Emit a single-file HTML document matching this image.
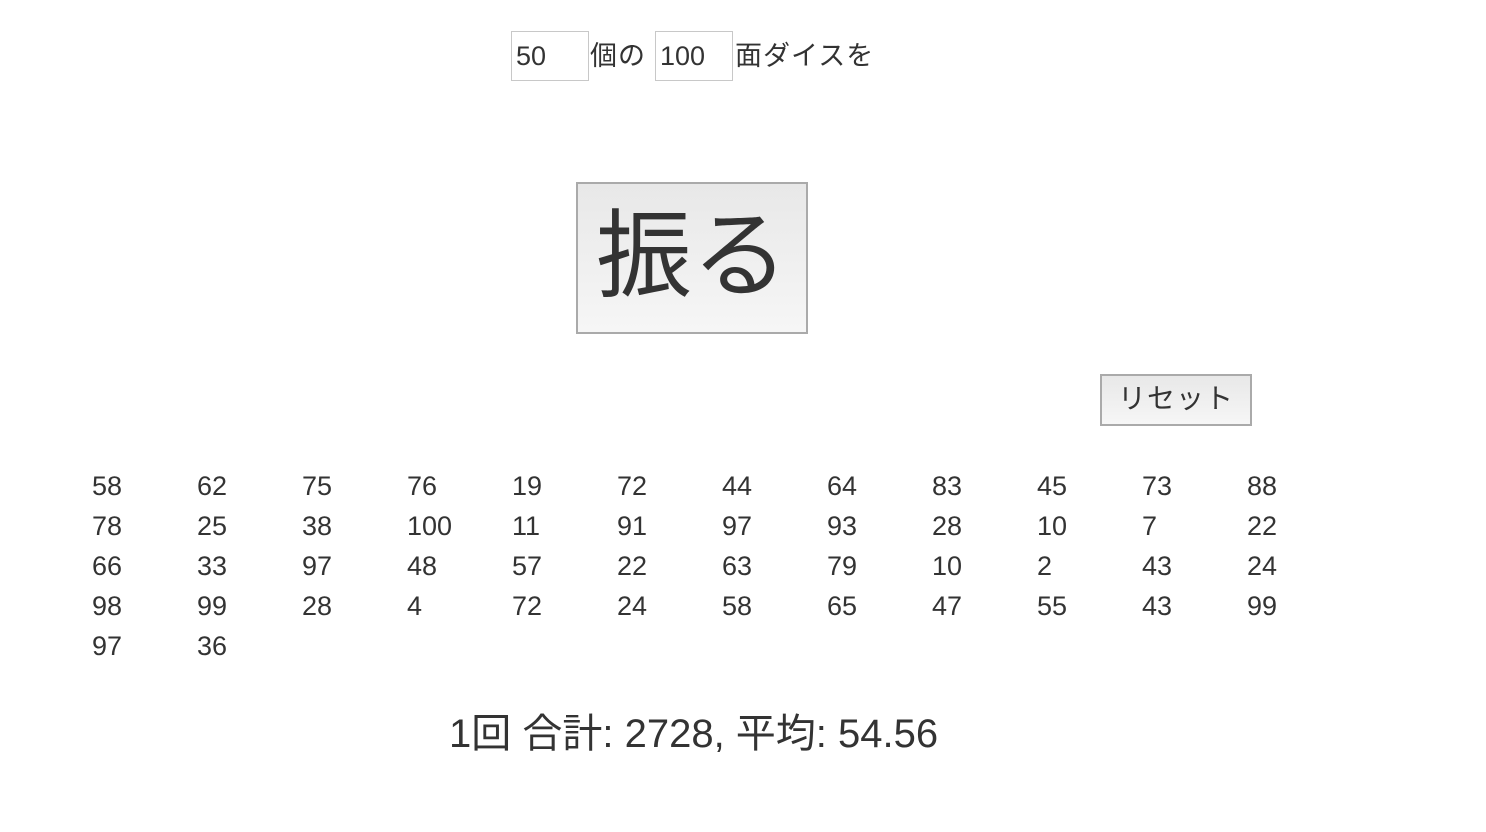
<!DOCTYPE html>
<html><head><meta charset="utf-8"><style>
body{margin:0;width:1486px;height:832px;background:#fff;color:#333;font-family:"Liberation Sans","Noto Sans CJK JP",sans-serif;position:relative;overflow:hidden}
.a{position:absolute;white-space:nowrap}
.in{position:absolute;box-sizing:border-box;border:1px solid #c8c8c8;font-size:27px;line-height:48px;padding-left:4px;height:50px;width:78px;top:31px}
.t{font-size:27px;top:36px;line-height:40px;letter-spacing:1px}
.btn{position:absolute;box-sizing:border-box;border:2px solid #aaa;background:linear-gradient(#e8e8e8,#f6f6f6);text-align:center}
.n{position:absolute;font-size:27px;line-height:40px}
</style></head><body>
<div class="in" style="left:511px">50</div>
<div class="a t" style="left:590px">個の</div>
<div class="in" style="left:655px">100</div>
<div class="a t" style="left:735px">面ダイスを</div>
<div class="btn" style="left:576px;top:182px;width:232px;height:152px;font-size:96px;line-height:146px">振る</div>
<div class="btn" style="left:1100px;top:374px;width:152px;height:52px;font-size:28px;line-height:46px;letter-spacing:1px">リセット</div>
<div id="nums"></div>
<div class="a" style="left:449px;top:711px;font-size:40px;line-height:46px">1回 合計: 2728, 平均: 54.56</div>
<script>
var v=[58,62,75,76,19,72,44,64,83,45,73,88,78,25,38,100,11,91,97,93,28,10,7,22,66,33,97,48,57,22,63,79,10,2,43,24,98,99,28,4,72,24,58,65,47,55,43,99,97,36];
var h='';for(var i=0;i<v.length;i++){h+='<div class="n" style="left:'+(92+105*(i%12))+'px;top:'+(466+40*Math.floor(i/12))+'px">'+v[i]+'</div>';}
document.getElementById('nums').innerHTML=h;
</script>
</body></html>
